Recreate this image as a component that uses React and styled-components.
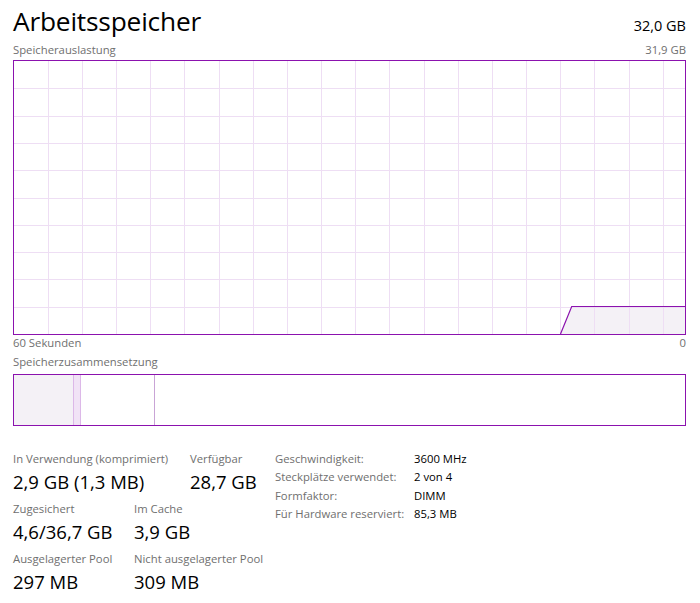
import React from "react";
import styled, { createGlobalStyle } from "styled-components";

const GlobalStyle = createGlobalStyle`
  html, body {
    margin: 0;
    padding: 0;
    background: #ffffff;
  }
  body {
    font-family: "Open Sans", "Noto Sans", "DejaVu Sans", sans-serif;
    color: #000;
  }
`;

const PURPLE = "#8b12ae";
const GRID = "#eedef4";
const FILL = "#f4f1f6";

const CHART_W = 671;
const CHART_H = 273;

function UsageGraph() {
  const cols = [];
  for (let x = 33.7; x < CHART_W; x += 34.17) cols.push(x);
  const rows = [];
  for (let i = 1; i < 10; i++) rows.push(i * 27.3);

  return (
    <svg width={CHART_W} height={CHART_H} style={{ display: "block" }}>
      <polygon
        points={`546.5,${CHART_H} 557.7,246 ${CHART_W},246 ${CHART_W},${CHART_H}`}
        fill={FILL}
      />
      {cols.map((x) => (
        <line
          key={"c" + x}
          x1={Math.round(x) + 0.5}
          x2={Math.round(x) + 0.5}
          y1={0}
          y2={CHART_H}
          stroke={GRID}
          strokeWidth="1"
        />
      ))}
      {rows.map((y) => (
        <line
          key={"r" + y}
          x1={0}
          x2={CHART_W}
          y1={Math.round(y) + 0.5}
          y2={Math.round(y) + 0.5}
          stroke={GRID}
          strokeWidth="1"
        />
      ))}
      <polyline
        points={`546.5,${CHART_H} 557.7,245.5 ${CHART_W},245.5`}
        fill="none"
        stroke={PURPLE}
        strokeWidth="1.2"
      />
    </svg>
  );
}

const details = [
  ["Geschwindigkeit:", "3600 MHz"],
  ["Steckplätze verwendet:", "2 von 4"],
  ["Formfaktor:", "DIMM"],
  ["Für Hardware reserviert:", "85,3 MB"],
];

const statRows = [
  {
    first: 177,
    items: [
      ["In Verwendung (komprimiert)", "2,9 GB (1,3 MB)"],
      ["Verfügbar", "28,7 GB"],
    ],
  },
  {
    first: 121,
    items: [
      ["Zugesichert", "4,6/36,7 GB"],
      ["Im Cache", "3,9 GB"],
    ],
  },
  {
    first: 121,
    items: [
      ["Ausgelagerter Pool", "297 MB"],
      ["Nicht ausgelagerter Pool", "309 MB"],
    ],
  },
];

function App() {
  return (
    <>
      <GlobalStyle />
      <Page>
        <Header>
          <Title>Arbeitsspeicher</Title>
          <Total>32,0 GB</Total>
        </Header>
        <CaptionRow>
          <span>Speicherauslastung</span>
          <span>31,9 GB</span>
        </CaptionRow>
        <ChartBox>
          <UsageGraph />
        </ChartBox>
        <CaptionRow $flush>
          <span>60 Sekunden</span>
          <span>0</span>
        </CaptionRow>
        <CaptionRow $gap>
          <span>Speicherzusammensetzung</span>
        </CaptionRow>
        <CompositionBar>
          <Segment $width={59} $fill={FILL} $line="#dcb8e8" />
          <Segment $width={6} $fill="#f1e3f6" $line="#dcb8e8" />
          <Segment $width={73} $fill="#ffffff" $line="#c9a4d6" />
          <Segment $grow $fill="#ffffff" />
        </CompositionBar>
        <Stats>
          <StatColumn>
            {statRows.map((row, i) => (
              <StatRow key={i}>
                {row.items.map(([label, value], j) => (
                  <Stat key={label} $width={j === 0 ? row.first : undefined}>
                    <StatLabel>{label}</StatLabel>
                    <StatValue>{value}</StatValue>
                  </Stat>
                ))}
              </StatRow>
            ))}
          </StatColumn>
          <DetailTable>
            {details.map(([k, v]) => (
              <DetailRow key={k}>
                <DetailKey>{k}</DetailKey>
                <DetailValue>{v}</DetailValue>
              </DetailRow>
            ))}
          </DetailTable>
        </Stats>
      </Page>
    </>
  );
}

const Page = styled.div`
  width: 700px;
  height: 603px;
  box-sizing: border-box;
  padding: 3px 14px 0 13px;
  overflow: hidden;
`;

const Header = styled.div`
  display: flex;
  justify-content: space-between;
  align-items: baseline;
`;

const Title = styled.h1`
  margin: 0;
  font-size: 26.3px;
  font-weight: 400;
  line-height: 36px;
  letter-spacing: -0.2px;
`;

const Total = styled.div`
  font-size: 14.5px;
  line-height: 20px;
`;

const CaptionRow = styled.div`
  display: flex;
  justify-content: space-between;
  font-size: 11.3px;
  line-height: 16px;
  color: #6f6f6f;
  margin-top: ${(p) => (p.$flush ? "0" : "3px")};
  margin-bottom: ${(p) => (p.$flush ? "0" : p.$gap ? "4px" : "2px")};
`;

const ChartBox = styled.div`
  width: ${CHART_W}px;
  height: ${CHART_H}px;
  border: 1px solid ${PURPLE};
`;

const CompositionBar = styled.div`
  display: flex;
  width: ${CHART_W}px;
  height: 50px;
  border: 1px solid ${PURPLE};
`;

const Segment = styled.div`
  flex: ${(p) => (p.$grow ? "1 1 auto" : `0 0 ${p.$width}px`)};
  background: ${(p) => p.$fill};
  border-right: ${(p) => (p.$line ? `1px solid ${p.$line}` : "none")};
`;

const Stats = styled.div`
  display: flex;
  margin-top: 25px;
`;

const StatColumn = styled.div`
  width: 262px;
  display: flex;
  flex-direction: column;
  gap: 7px;
`;

const StatRow = styled.div`
  display: flex;
`;

const Stat = styled.div`
  display: flex;
  flex-direction: column;
  flex: ${(p) => (p.$width ? `0 0 ${p.$width}px` : "0 0 auto")};
  gap: 2px;
`;

const StatLabel = styled.div`
  font-size: 11.3px;
  line-height: 16px;
  color: #6f6f6f;
  white-space: nowrap;
`;

const StatValue = styled.div`
  font-size: 18.5px;
  line-height: 25px;
  white-space: nowrap;
`;

const DetailTable = styled.div`
  display: flex;
  flex-direction: column;
  margin-top: -1px;
`;

const DetailRow = styled.div`
  display: grid;
  grid-template-columns: 139px auto;
  font-size: 11.3px;
  line-height: 18.3px;
`;

const DetailKey = styled.div`
  color: #6f6f6f;
  white-space: nowrap;
`;

const DetailValue = styled.div`
  color: #000;
  white-space: nowrap;
`;

export default App;
